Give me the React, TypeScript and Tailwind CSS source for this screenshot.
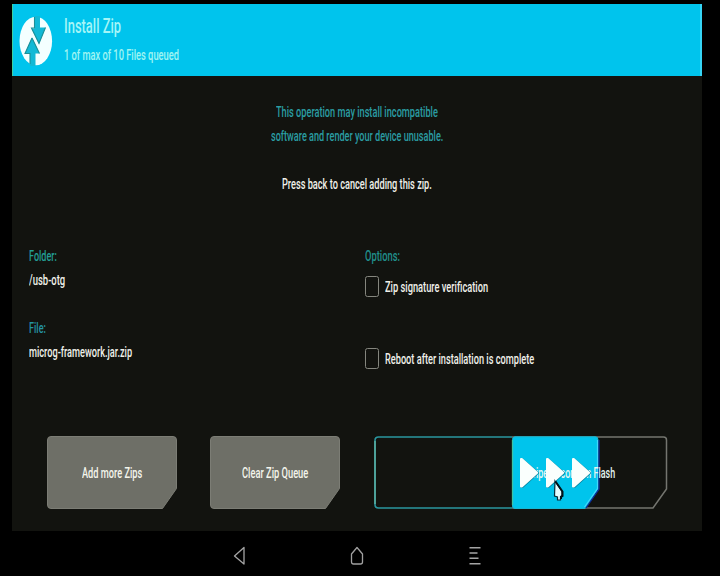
import { useLayoutEffect, useRef, useState } from "react";

type LineProps = { text: string; width: number; className?: string };

// A single line of type, condensed horizontally to a given width.
function Line({ text, width, className = "" }: LineProps) {
  const ref = useRef<HTMLSpanElement>(null);
  const [scale, setScale] = useState(0.6);
  useLayoutEffect(() => {
    if (ref.current) setScale(width / ref.current.offsetWidth);
  }, [width, text]);
  return (
    <div className={`h-6 text-[15.5px] leading-6 font-medium whitespace-nowrap ${className}`} style={{ width }}>
      <span ref={ref} className="inline-block origin-left" style={{ transform: `scaleX(${scale})` }}>
        {text}
      </span>
    </div>
  );
}

function Logo() {
  return (
    <svg className="h-[50px] w-[34px] shrink-0" viewBox="0 0 34 50">
      <ellipse cx="16.800" cy="25" rx="16.300" ry="24.300" fill="#f4ffff" />
      <path d="M15.500 0H21V11.500H26.500L20 28L12.500 12.500H15.500Z" fill="#12b9d6" />
      <path d="M11 50V37.500H6L13 21.500L20.500 37.500H16.500V50Z" fill="#12b9d6" />
      <path d="M15.500 1V12H12.500L20 27.500L26.500 11.500M13 22L6 37.500H11V48M13 22L20.500 37.500" fill="none" stroke="#1a8f98" strokeWidth="1.100" />
    </svg>
  );
}

function Checkbox({ label, width }: { label: string; width: number }) {
  return (
    <div className="flex h-6 items-center">
      <span className="mr-[6px] mb-px h-[21px] w-[14px] rounded-[2.5px] border-[1.3px] border-[#85867e]" />
      <Line text={label} width={width} className="text-[#f0f0ea]" />
    </div>
  );
}

function ActionButton({ label, width }: { label: string; width: number }) {
  return (
    <button className="relative flex h-[73px] w-[130px] items-center justify-center">
      <svg className="absolute inset-0 h-full w-full" viewBox="0 0 130 73">
        <path d="M4 .5H126Q129.500.5 129.500 4V52.500L115.500 72.500H4Q.5 72.500.5 69V4Q.5.5 4 .5Z" fill="#6e6f67" stroke="#7c7d75" strokeWidth="1" />
      </svg>
      <Line text={label} width={width} className="relative mt-px text-[#f4f5ec]" />
    </button>
  );
}

function Swipe() {
  return (
    <div className="relative flex h-[73px] w-[294px] items-center pl-[150px]">
      <svg className="absolute inset-0 h-full w-full" viewBox="0 0 294 73" fill="none">
        <path d="M138 1H289.500Q292.500 1 292.500 4V53L279 72H138" stroke="#74756f" strokeWidth="1.500" />
        <path d="M138 1H4.500Q1 1 1 4.500V68.500Q1 72 4.500 72H138" stroke="#2a969f" strokeWidth="1.600" />
        <path d="M1 5V68" stroke="#58aca0" strokeWidth="1.600" />
        <path d="M141 .8H221.500Q224 .8 224 4V53L211 72.500H141Q138.500 72.500 138.500 70V3.500Q138.500.8 141 .8Z" fill="#00c4ec" stroke="#16b8d4" />
        <path d="M138.500 4V69" stroke="#3cc3a5" strokeWidth="1.300" />
        <path d="M225 4V53L212 72" stroke="#0a2c9d" strokeWidth="1.300" />
        <path d="M223.500 4V52.500L210.500 71" stroke="#42d7fa" strokeWidth="1.200" />
      </svg>
      <Line text="Swipe to confirm Flash" width={91} className="relative mt-px text-[#e4f5f2]" />
      <svg className="absolute inset-0 h-full w-full" viewBox="0 0 294 73">
        {[146, 172, 198].map((x) => (
          <g key={x} transform={`translate(${x} 22)`} strokeLinejoin="round" strokeWidth="2">
            <path d="M1.500 1.500H2.500L18 15L2.500 29H1.500Z" fill="#0785a0" stroke="#0785a0" />
            <path d="M1 1H1.800L17.200 14.800L1.800 28.500H1Z" fill="#fafffd" stroke="#fafffd" />
          </g>
        ))}
        <path d="M181 45L188 55.500V59.500L186.500 60.500V64H183.500V61L180.500 60Z" fill="#e4fcff" stroke="#062b38" strokeWidth="1.200" />
        <path d="M181.500 45.500L188.500 55.500V60L187 61V63" fill="none" stroke="#021218" strokeWidth="2" />
      </svg>
    </div>
  );
}

function NavBar() {
  return (
    <nav className="flex h-[45px] items-center pt-[5px] pl-[233px]">
      <svg className="h-5 w-3" viewBox="0 0 12 20" fill="none" stroke="#a5a5a5" strokeWidth="1.300">
        <path d="M11 1.500V18L1.500 10Z" strokeLinejoin="round" />
      </svg>
      <svg className="ml-[105px] h-5 w-[14px]" viewBox="0 0 14 20" fill="none" stroke="#a0a0a0" strokeWidth="1.300">
        <path d="M7 1.500L12.500 8V16Q12.500 18 10.500 18H3.500Q1.500 18 1.500 16V8Z" strokeLinejoin="round" />
      </svg>
      <svg className="ml-[105px] h-5 w-3" viewBox="0 0 12 20" fill="none" stroke="#a5a5a5" strokeWidth="1.500">
        <path d="M.5 1.700H11.500M.5 7H8.500M.5 12.300H9.500M.5 17.700H11.500" />
      </svg>
    </nav>
  );
}

export default function App() {
  return (
    <div className="h-[576px] w-[720px] overflow-hidden bg-black pt-1 font-['Roboto','Liberation_Sans',sans-serif]">
      <div className="ml-3 w-[690px]">
        <header className="flex h-[72px] border-r-2 border-l-[1.5px] border-r-[#35d4f5] border-l-[#3fcf9f] bg-[#00c4ed] pl-[6px]">
          <div className="pt-3">
            <Logo />
          </div>
          <div className="ml-[11px] pt-[10px]">
            <Line text="Install Zip" width={57} className="text-[20px] text-[#a4f5f7]" />
            <Line text="1 of max of 10 Files queued" width={115} className="mt-[5px] text-[#a0f5f2]" />
          </div>
        </header>
        <main className="flex h-[455px] flex-col bg-[#12130f] pt-6">
          <div className="flex flex-col items-center text-[#2a9da3]">
            <Line text="This operation may install incompatible" width={162} />
            <Line text="software and render your device unusable." width={172} />
            <Line text="Press back to cancel adding this zip." width={150} className="mt-6 text-[#f0f1ea]" />
          </div>
          <div className="mt-12 flex h-[192px] pl-[17px]">
            <section className="w-[336px]">
              <Line text="Folder:" width={28} className="text-[#239e94]" />
              <Line text="/usb-otg" width={36} className="text-[#f0f1ea]" />
              <Line text="File:" width={17} className="mt-6 text-[#2594a2]" />
              <Line text="microg-framework.jar.zip" width={103} className="text-[#f0f1ea]" />
            </section>
            <section>
              <Line text="Options:" width={35} className="text-[#208f8b]" />
              <div className="mt-[7px] flex flex-col gap-12">
                <Checkbox label="Zip signature verification" width={103} />
                <Checkbox label="Reboot after installation is complete" width={149} />
              </div>
            </section>
          </div>
          <div className="flex pl-[35px]">
            <ActionButton label="Add more Zips" width={60} />
            <div className="ml-[33px]">
              <ActionButton label="Clear Zip Queue" width={66} />
            </div>
            <div className="ml-[34px]">
              <Swipe />
            </div>
          </div>
        </main>
      </div>
      <NavBar />
    </div>
  );
}
